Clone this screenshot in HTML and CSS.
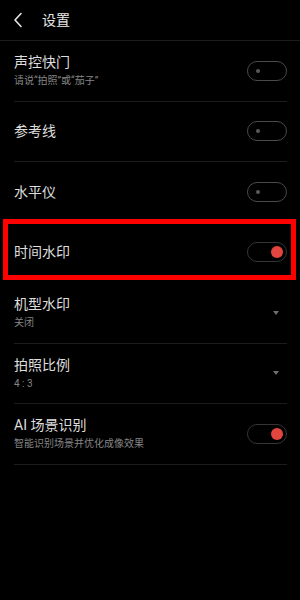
FILE: index.html
```html
<!DOCTYPE html>
<html lang="zh-CN">
<head>
<meta charset="utf-8">
<title>设置</title>
<link rel="stylesheet" href="styles.css">
</head>
<body>
<header class="header">
  <svg class="back" width="10" height="16" viewBox="0 0 10 16"><path d="M8 1.5 L2 8 L8 14.5" fill="none" stroke="#e6e6e6" stroke-width="1.6" stroke-linecap="round" stroke-linejoin="round"/></svg>
  <span class="title">设置</span>
</header>
<main class="list">
  <div class="row">
    <div class="text"><div class="name">声控快门</div><div class="sub">请说“拍照”或“茄子”</div></div>
    <span class="toggle"><span class="dot"></span></span>
  </div>
  <div class="row">
    <div class="text"><div class="name">参考线</div></div>
    <span class="toggle"><span class="dot"></span></span>
  </div>
  <div class="row">
    <div class="text"><div class="name">水平仪</div></div>
    <span class="toggle"><span class="dot"></span></span>
  </div>
  <div class="row row-marked">
    <div class="text"><div class="name">时间水印</div></div>
    <span class="toggle on"><span class="dot"></span></span>
    <span class="mark"></span>
  </div>
  <div class="row">
    <div class="text"><div class="name">机型水印</div><div class="sub">关闭</div></div>
    <span class="caret"></span>
  </div>
  <div class="row">
    <div class="text"><div class="name">拍照比例</div><div class="sub">4 : 3</div></div>
    <span class="caret"></span>
  </div>
  <div class="row">
    <div class="text"><div class="name">AI 场景识别</div><div class="sub">智能识别场景并优化成像效果</div></div>
    <span class="toggle on"><span class="dot"></span></span>
  </div>
</main>
</body>
</html>
```
FILE: styles.css
```css
html, body {
  margin: 0;
  padding: 0;
  background: #000;
}
body {
  width: 300px;
  height: 600px;
  font-family: "Roboto", "Noto Sans CJK SC", sans-serif;
  color: #dedede;
  overflow: hidden;
}
.header {
  height: 40px;
  border-bottom: 1px solid #1c1c1c;
  display: flex;
  align-items: center;
  padding-left: 13px;
}
.back {
  display: block;
}
.title {
  margin-left: 19px;
  font-size: 14px;
  line-height: 18px;
  color: #e8e8e8;
}
.list {
  padding: 0 13px 0 14px;
}
.row {
  box-sizing: border-box;
  height: 60.5px;
  border-bottom: 1px solid #1c1c1c;
  display: flex;
  align-items: center;
  justify-content: space-between;
}
.row-marked {
  position: relative;
  border-bottom-color: transparent;
}
.text {
  display: flex;
  flex-direction: column;
}
.name {
  font-size: 14px;
  line-height: 18px;
  color: #dedede;
}
.sub {
  font-size: 10px;
  line-height: 14px;
  margin-top: 3px;
  color: #858585;
}
.toggle {
  box-sizing: border-box;
  width: 40px;
  height: 20px;
  border: 1px solid #4a4a4a;
  border-radius: 10px;
  display: flex;
  align-items: center;
  padding-left: 8px;
}
.toggle .dot {
  width: 4px;
  height: 4px;
  border-radius: 50%;
  background: #5a5a5a;
}
.toggle.on {
  border-color: #353535;
  justify-content: flex-end;
  padding-left: 0;
  padding-right: 3px;
}
.toggle.on .dot {
  width: 12px;
  height: 12px;
  background: #e2463e;
}
.caret {
  width: 0;
  height: 0;
  border-left: 3px solid transparent;
  border-right: 3px solid transparent;
  border-top: 4px solid #6e6e6e;
  margin-right: 8px;
}
.mark {
  position: absolute;
  left: -11px;
  right: -9px;
  top: -4px;
  bottom: 2px;
  border: 5px solid #ff0000;
}
```
